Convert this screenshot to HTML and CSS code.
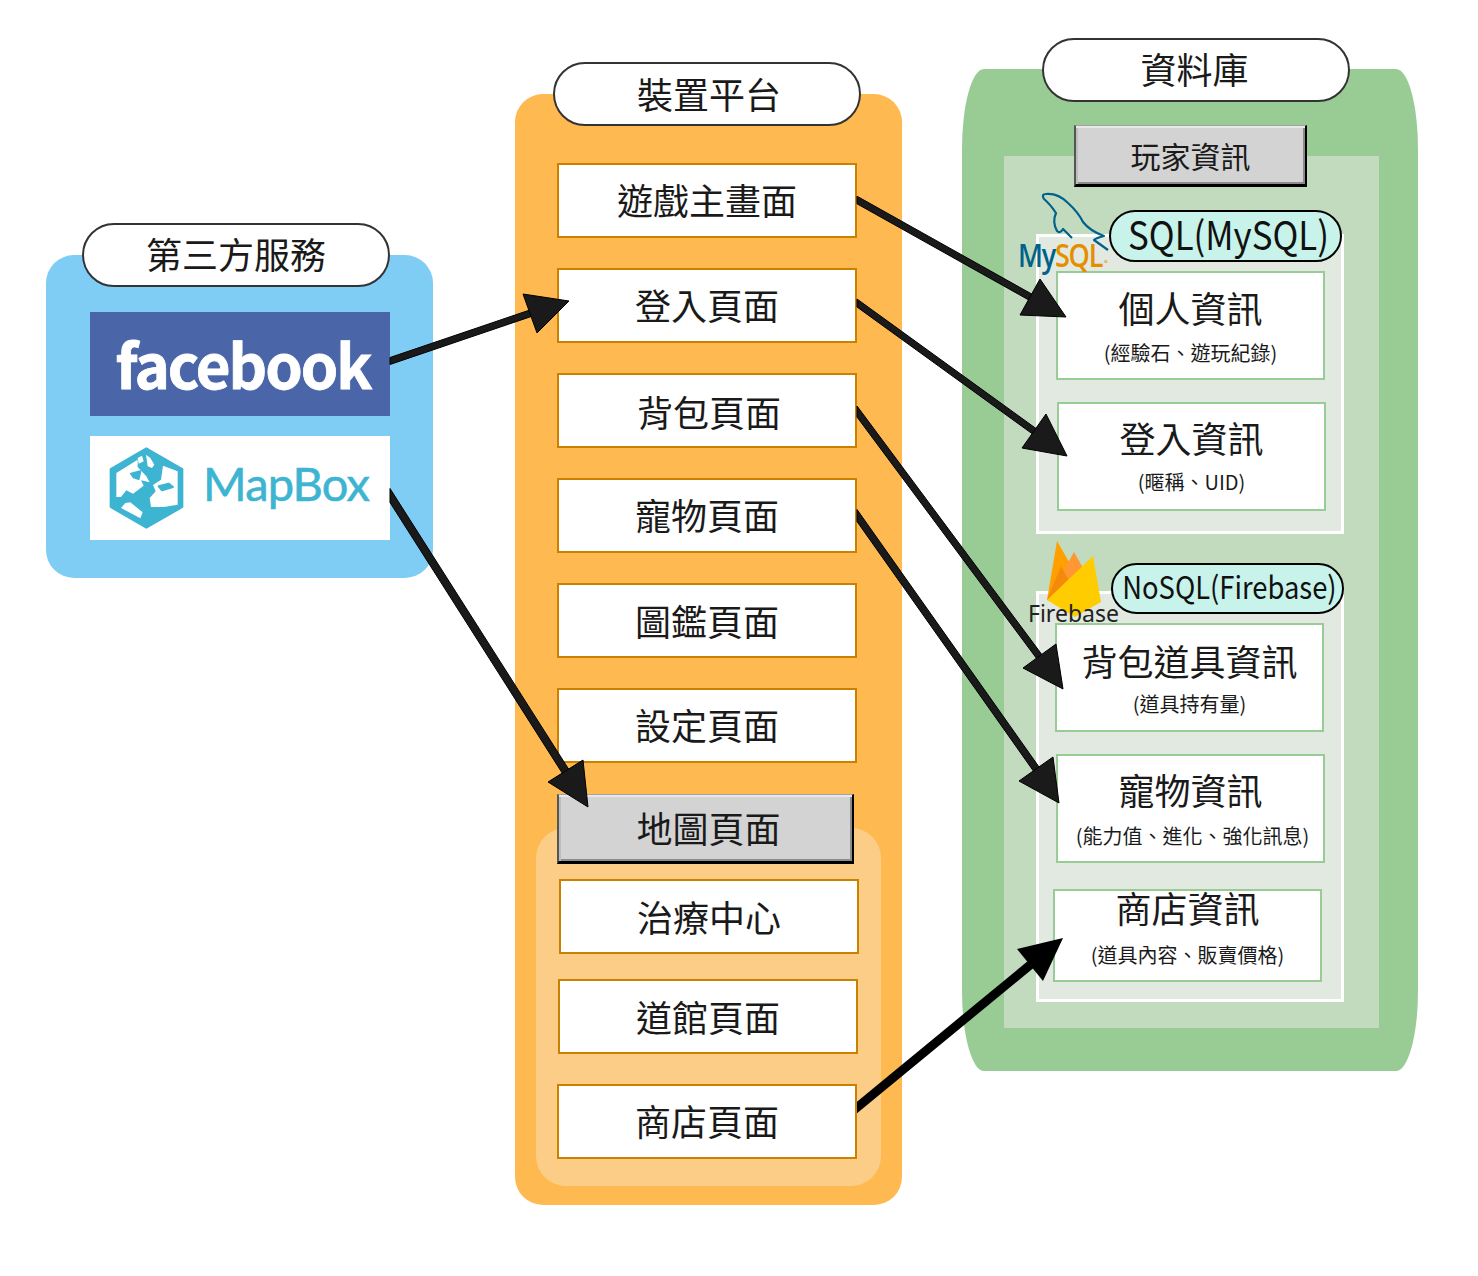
FILE: index.html
```html
<!DOCTYPE html>
<html lang="zh-Hant">
<head>
<meta charset="utf-8">
<title>系統架構圖</title>
<link rel="stylesheet" href="styles.css">
</head>
<body>
<main class="canvas">
  <div class="panel panel-services"></div>
  <div class="pill pill-services">第三方服務</div>
  <div class="brand brand-fb">facebook</div>
  <div class="brand brand-mapbox">
    <svg class="mapbox-hex" viewBox="237 712 223 246" aria-hidden="true">
      <path class="hex-fill" d="M348 716 456 778V892L348 954 241 892V778Z"/>
      <path class="hex-land" d="M258 790 322 750 322 772 348 800 358 818 332 812 340 828 308 852 288 842 272 862 258 862Z"/>
      <path class="hex-fill" d="M302 792 330 785 325 808 310 803Z"/>
      <path class="hex-land" d="M322 745 335 738 340 755 325 762ZM347 735 360 745 372 765 365 775 352 770ZM398 768 442 785V885L400 892 362 892 358 865 376 845 368 826 392 810ZM285 880 300 878 337 908 330 926 272 895Z"/>
      <path class="hex-fill" d="M385 830 415 822 428 832 395 842Z"/>
    </svg>
    <span class="mapbox-name">MapBox</span>
  </div>

  <div class="panel panel-device"></div>
  <div class="pill pill-device">裝置平台</div>
  <div class="panel-sub"></div>
  <div class="page p1">遊戲主畫面</div>
  <div class="page p2">登入頁面</div>
  <div class="page p3">背包頁面</div>
  <div class="page p4">寵物頁面</div>
  <div class="page p5">圖鑑頁面</div>
  <div class="page p6">設定頁面</div>
  <div class="bevel bevel-map">地圖頁面</div>
  <div class="page p7">治療中心</div>
  <div class="page p8">道館頁面</div>
  <div class="page p9">商店頁面</div>

  <div class="panel-db"></div>
  <div class="pill pill-db">資料庫</div>
  <div class="db-inner"></div>
  <div class="bevel bevel-player">玩家資訊</div>

  <div class="group group-sql"></div>
  <div class="info i1"><div class="info-title">個人資訊</div><div class="info-sub">(經驗石、遊玩紀錄)</div></div>
  <div class="info i2"><div class="info-title">登入資訊</div><div class="info-sub">(暱稱、UID)</div></div>
  <div class="tag tag-sql"><span>SQL(MySQL)</span></div>

  <div class="group group-nosql"></div>
  <div class="info i3"><div class="info-title">背包道具資訊</div><div class="info-sub">(道具持有量)</div></div>
  <div class="info i4"><div class="info-title">寵物資訊</div><div class="info-sub">(能力值、進化、強化訊息)</div></div>
  <div class="info i5"><div class="info-title">商店資訊</div><div class="info-sub">(道具內容、販賣價格)</div></div>
  <div class="tag tag-nosql"><span>NoSQL(Firebase)</span></div>

  <svg class="overlay" viewBox="0 0 1478 1276" aria-hidden="true">
    <path class="dolphin" d="M1072 238 1063 229Q1060 234 1057 231 1052 222 1056 213 1050 204 1044 199 1041 194 1046 194 1058 193 1068 203 1078 212 1083 222 1090 231 1104 236 1096 238 1094 240L1108 250"/>
    <path class="fire-a" d="M1047 600 1057 541 1076 574Z"/>
    <path class="fire-b" d="M1047 600 1074 552 1083 568Z"/>
    <path class="fire-c" d="M1047 600 1061 566 1072 586Z"/>
    <path class="fire-d" d="M1047 600 1093 556 1101 602 1075 617Z"/>
  </svg>
  <div class="logo-mysql"><span class="my">My</span><span class="sql">SQL</span></div>
  <div class="logo-reg">®</div>
  <div class="logo-firebase">Firebase</div>

  <svg class="overlay" viewBox="0 0 1478 1276" aria-hidden="true">
    <path class="arrow" d="M390 357.5 543 305.5V312.5L390 364.5Z"/>
    <path class="arrow" d="M569 301 523 294 537 333Z"/>
    <path class="arrow" d="M390 488.5 573 776V790L390 502.5Z"/>
    <path class="arrow" d="M588 807 583 760 548 782Z"/>
    <path class="arrow" d="M857 196.2 1042 299.8V307.4L857 203.8Z"/>
    <path class="arrow" d="M1066 317 1040 279 1020 315Z"/>
    <path class="arrow" d="M857 299 1045 435V443L857 307Z"/>
    <path class="arrow" d="M1067 456 1046 414 1022 448Z"/>
    <path class="arrow" d="M857 406 1047 661.5V672.5L857 417Z"/>
    <path class="arrow" d="M1063 689 1056 644 1023 668Z"/>
    <path class="arrow" d="M857 509.5 1044 774V786L857 521.5Z"/>
    <path class="arrow" d="M1059 803 1053 757 1019 781Z"/>
    <path class="arrow-black" d="M857 1101.7 1041 950.2V961.8L857 1113.3Z"/>
    <path class="arrow-black" d="M1063 938 1017 949 1043 981Z"/>
  </svg>
</main>
</body>
</html>
```

FILE: styles.css
```css
* { box-sizing: border-box; }
html, body { margin: 0; padding: 0; background: #fff; }
.canvas {
  position: relative;
  width: 1478px;
  height: 1276px;
  overflow: hidden;
  font-family: "Noto Sans CJK TC", "Noto Sans", sans-serif;
  color: #1a1a1a;
}
.canvas > * { position: absolute; }

.panel { border-radius: 28px; }
.panel-services { left: 46px; top: 255px; width: 387px; height: 323px; background: #7fcdf5; }
.panel-device { left: 515px; top: 94px; width: 387px; height: 1111px; background: #ffb951; }
.panel-sub { left: 536px; top: 828px; width: 345px; height: 358px; background: #fbcd87; border-radius: 30px; }
.panel-db { left: 962px; top: 69px; width: 456px; height: 1002px; background: #99cc95; border-radius: 22px / 80px; }
.db-inner { left: 1004px; top: 156px; width: 375px; height: 872px; background: #c2dbbf; }

.pill {
  display: flex; align-items: center; justify-content: center;
  width: 308px; height: 64px; padding-bottom: 3px;
  background: #fff; border: 2px solid #333; border-radius: 32px;
  font-size: 36px; line-height: 1;
}
.pill-services { left: 82px; top: 223px; padding-bottom: 5px; }
.pill-device { left: 553px; top: 62px; padding-left: 4px; }
.pill-db { left: 1042px; top: 38px; padding-right: 3px; padding-bottom: 5px; }

.brand { left: 90px; width: 300px; height: 104px; display: flex; align-items: center; }
.brand-fb {
  top: 312px; background: #4a66a8; color: #fff;
  justify-content: center; padding-left: 6px; padding-bottom: 2px;
  font-weight: 700; font-size: 60px; line-height: 1; letter-spacing: -2px;
  -webkit-text-stroke: .8px #fff;
}
.brand-mapbox { top: 436px; background: #fff; }
.mapbox-hex { position: absolute; left: 19px; top: 11px; width: 75px; height: 82px; }
.hex-fill { fill: #3db4d2; stroke: #3db4d2; stroke-width: 6px; stroke-linejoin: round; }
.hex-land { fill: #fff; }
.mapbox-name {
  position: absolute; left: 113px; top: 15px;
  font-family: "Lato", sans-serif; font-size: 47px; line-height: 64px; color: #3db4d2; letter-spacing: -.8px;
  -webkit-text-stroke: .6px #3db4d2;
}

.page {
  display: flex; align-items: center; justify-content: center;
  width: 300px; height: 75px; padding-bottom: 3px;
  background: #fff; border: 2px solid #cc8000;
  font-size: 36px; line-height: 1;
}
.p1 { left: 557px; top: 163px; }
.p2 { left: 557px; top: 268px; }
.p3 { left: 557px; top: 373px; padding-left: 4px; padding-bottom: 0; }
.p4 { left: 557px; top: 478px; }
.p5 { left: 557px; top: 583px; padding-bottom: 1px; }
.p6 { left: 557px; top: 688px; }
.p7 { left: 559px; top: 879px; padding-bottom: 1px; }
.p8 { left: 558px; top: 979px; padding-bottom: 1px; }
.p9 { left: 557px; top: 1084px; }

.bevel {
  display: flex; align-items: center; justify-content: center;
  background: #d3d3d3;
  border-style: solid; border-width: 1px 2px 3px 2px;
  border-color: #a3a3a3 #000 #000 #555;
  box-shadow: inset 0 2px 0 #e8e8e8, inset 2px 0 0 #bdbdbd, inset -2px 0 0 #8c8c8c, inset 0 -2px 0 #8c8c8c;
  font-size: 36px; line-height: 1;
}
.bevel-map { left: 557px; top: 794px; width: 297px; height: 70px; padding-left: 6px; padding-bottom: 2px; }
.bevel-player { left: 1074px; top: 125px; width: 233px; height: 62px; font-size: 30px; }

.group { background: #e2e9e1; border: 3px solid #fff; width: 308px; left: 1036px; }
.group-sql { top: 234px; height: 300px; }
.group-nosql { top: 591px; height: 411px; }

.info {
  display: flex; flex-direction: column; align-items: center;
  width: 269px; height: 109px;
  background: #fff; border: 2px solid #99cc95;
}
.info-title { font-size: 36px; line-height: 40px; }
.info-sub { font-size: 20px; line-height: 24px; }
.i1 { left: 1056px; top: 271px; padding-top: 14px; gap: 14px; }
.i2 { left: 1057px; top: 402px; padding-top: 13px; gap: 13px; }
.i3 { left: 1055px; top: 623px; padding-top: 15px; gap: 12px; }
.i4 { left: 1056px; top: 754px; padding-top: 13px; gap: 15px; }
.i4 .info-sub { margin-left: 4px; }
.i5 { left: 1053px; top: 889px; height: 93px; gap: 20px; }
.i5 .info-title { line-height: 32px; }

.tag {
  display: flex; align-items: center; justify-content: center;
  width: 233px;
  background: #c8f3ea; border: 2px solid #000; border-radius: 26px;
  line-height: 1; white-space: nowrap; color: #111;
}
.tag span { display: block; }
.tag-sql { left: 1109px; top: 210px; height: 52px; font-size: 39px; padding-bottom: 5px; padding-left: 7px; }
.tag-sql span { transform: scaleX(.893); }
.tag-nosql { left: 1111px; top: 563px; height: 51px; font-size: 31px; padding-bottom: 6px; padding-left: 4px; }
.tag-nosql span { transform: scaleX(.883); }

.overlay { left: 0; top: 0; width: 1478px; height: 1276px; pointer-events: none; }
.dolphin { fill: none; stroke: #00618a; stroke-width: 2.2px; stroke-linejoin: round; }
.fire-a { fill: #ffa000; }
.fire-b { fill: #ff9833; }
.fire-c { fill: #f58a0a; }
.fire-d { fill: #ffcc00; }

.logo-mysql {
  left: 1018px; top: 233px;
  font-family: "Open Sans", sans-serif; font-weight: 600; font-size: 33px; line-height: 44px; letter-spacing: -1.5px;
  transform: scaleX(.82); transform-origin: left center; white-space: nowrap;
}
.my { color: #00618a; }
.sql { color: #e48e00; }
.logo-reg { left: 1104px; top: 257px; font-size: 8px; line-height: 12px; color: #e48e00; }
.logo-firebase {
  left: 1028px; top: 596px;
  font-family: "Noto Sans", sans-serif; font-size: 23px; line-height: 34px; color: #222;
}

.arrow { fill: #1a1a1a; stroke: #000; stroke-width: 1px; }
.arrow-black { fill: #000; }
```
